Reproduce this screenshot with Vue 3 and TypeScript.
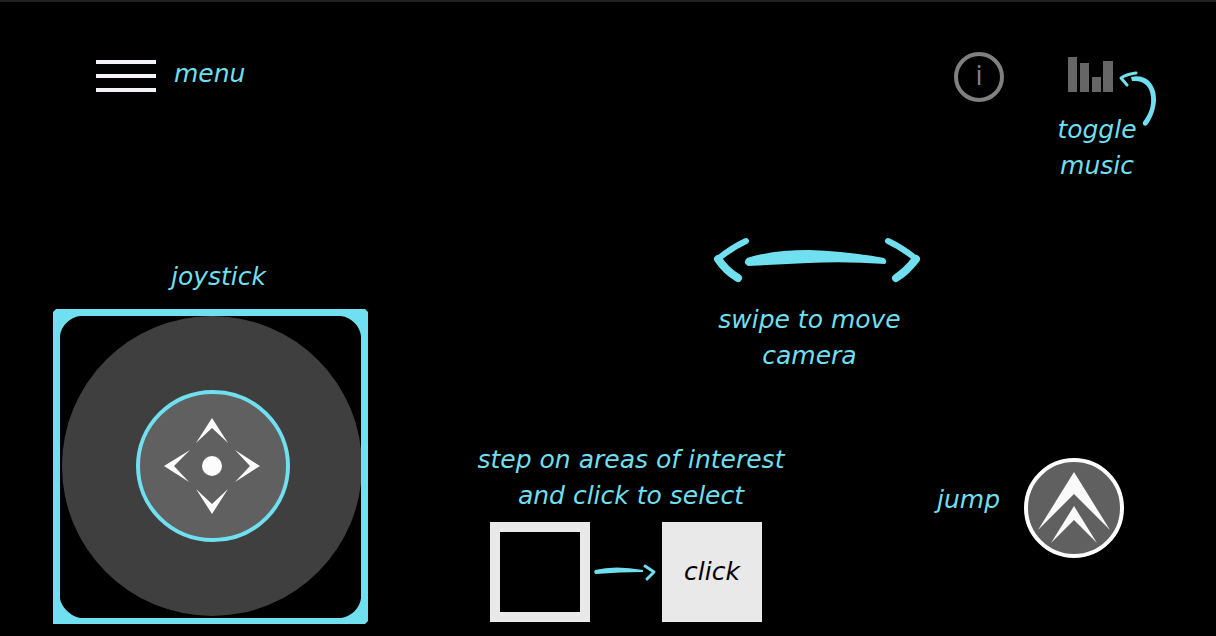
<script setup lang="ts">
interface Bar {
  x: number
  y: number
  width: number
}

const bars: Bar[] = [
  { x: 12, y: 1, width: 9 },
  { x: 24, y: 7, width: 9 },
  { x: 36, y: 21, width: 9 },
  { x: 47, y: 5, width: 10 },
]
</script>

<template>
  <div class="hud">
    <header class="top">
      <button class="menu" type="button">
        <svg class="burger" width="60" height="32" viewBox="0 0 60 32" aria-hidden="true">
          <path d="M0 2H60M0 16H60M0 30H60" stroke="#f5f2f6" stroke-width="4" />
        </svg>
        <span>menu</span>
      </button>

      <div class="actions">
        <button class="info" type="button" aria-label="Information">i</button>
        <button class="music" type="button">
          <svg class="music-icon" width="102" height="56" viewBox="0 0 102 56" aria-hidden="true">
            <rect v-for="bar in bars" :key="bar.x" :x="bar.x" :y="bar.y" :width="bar.width" :height="36 - bar.y" fill="#666" />
            <path d="M80 17Q71 18 65 22L71 29" fill="none" stroke="#70dfef" stroke-width="3" stroke-linecap="round" stroke-linejoin="round" />
            <path d="M75 21C91 17 101 30 100 45C99 56 95 64 91 69C89 71 86 69 87 66C93 58 96 50 95 41C94 30 88 24 76 25Z" fill="#70dfef" />
          </svg>
          <span>toggle<br />music</span>
        </button>
      </div>
    </header>

    <main class="controls">
      <section class="joystick">
        <h2 class="note">joystick</h2>
        <svg class="pad" width="315" height="315" viewBox="0 0 315 315" role="img" aria-label="joystick">
          <circle cx="159" cy="157" r="150" fill="#3f3f3f" />
          <ellipse cx="160" cy="157" rx="75" ry="74" fill="#606060" stroke="#70dfef" stroke-width="4" />
          <circle cx="159" cy="157" r="10" fill="#fcfcfc" />
          <g fill="#fcfcfc">
            <path d="M159 109L175 134L159 119L143 134Z" />
            <path d="M159 205L175 180L159 195L143 180Z" />
            <path d="M111 157L137 141L121 157L136 173Z" />
            <path d="M207 157L182 141L197 157L182 173Z" />
          </g>
          <path
            fill="#70dfef"
            fill-rule="evenodd"
            d="M3 0H312L315 3V312L312 315H0V3ZM27 7C17 8 8 17 7 27V289C8 298 18 308 28 309H288C298 308 307 299 308 289V27C307 17 298 8 288 7Z"
          />
        </svg>
      </section>

      <div class="field">
        <section class="swipe">
          <svg width="220" height="52" viewBox="0 0 220 52" aria-hidden="true">
            <g fill="none" stroke="#70dfef" stroke-linejoin="round" stroke-linecap="round">
              <path d="M46 7Q31 14 18 25" stroke-width="6" />
              <path d="M18 25Q26 37 38 44" stroke-width="8" />
              <path d="M188 7Q203 14 216 25" stroke-width="6" />
              <path d="M216 25Q207 37 196 44" stroke-width="8" />
            </g>
            <path d="M47 24Q72 16 109 16Q146 17 184 24Q188 27 185 30Q145 27 108 29L48 32Q42 29 47 24Z" fill="#70dfef" />
          </svg>
          <h2 class="note">swipe to move<br />camera</h2>
        </section>

        <div class="bottom">
          <section class="step">
            <h2 class="note">step on areas of interest<br />and click to select</h2>
            <div class="tiles">
              <div class="tile outline"></div>
              <svg width="72" height="24" viewBox="0 0 72 24" aria-hidden="true">
                <path d="M5 10Q25 5 53 10L53 12Q30 12 6 14Q3 13 5 10Z" fill="#70dfef" />
                <path d="M55 6L64 12L57 19" fill="none" stroke="#70dfef" stroke-width="3" stroke-linecap="round" stroke-linejoin="round" />
              </svg>
              <button class="tile click" type="button">click</button>
            </div>
          </section>

          <div class="jump">
            <label class="note" for="jump">jump</label>
            <button id="jump" class="jump-button" type="button">
              <svg width="100" height="100" viewBox="0 0 100 100" aria-hidden="true">
                <circle cx="50" cy="50" r="48" fill="#606060" stroke="#fff" stroke-width="4" />
                <path d="M50 14L86 72L50 36L14 72ZM50 48L73 85L50 62L27 85Z" fill="#fafafa" />
              </svg>
            </button>
          </div>
        </div>
      </div>
    </main>
  </div>
</template>

<style>
body {
  margin: 0;
  background: #000;
}
</style>

<style scoped>
.hud {
  box-sizing: border-box;
  display: flex;
  flex-direction: column;
  justify-content: space-between;
  min-height: 100vh;
  border-top: 2px solid #222;
  background: #000;
  color: #70dfef;
  font: italic 25px/36px "DejaVu Sans", sans-serif;
}

button {
  padding: 0;
  border: 0;
  background: none;
  color: inherit;
  font: inherit;
  cursor: pointer;
}

svg {
  display: block;
  flex: none;
}

.note {
  margin: 0;
  font: inherit;
  text-align: center;
  white-space: nowrap;
}

.top {
  display: flex;
  justify-content: space-between;
  align-items: flex-start;
  padding: 50px 58px 0 96px;
}

.menu {
  display: flex;
  align-items: center;
  gap: 18px;
  padding-top: 4px;
}

.burger {
  margin-top: 4px;
}

.actions {
  display: flex;
  align-items: flex-start;
  gap: 52px;
}

.info {
  box-sizing: border-box;
  width: 50px;
  height: 50px;
  border: 4px solid #808080;
  border-radius: 50%;
  color: #808080;
  font: 28px/36px "Open Sans", sans-serif;
  padding-bottom: 6px;
}

.music {
  padding-top: 4px;
  text-align: left;
}

.music-icon {
  overflow: visible;
}

.music span {
  display: block;
  width: 82px;
  text-align: center;
}

.controls {
  display: grid;
  grid-template-columns: 315px 1fr;
  align-items: end;
  padding: 0 92px 12px 53px;
}

.joystick .note {
  padding: 0 0 14px 16px;
}

.field {
  display: flex;
  flex-direction: column;
  gap: 68px;
  padding: 0 0 2px 107px;
}

.swipe {
  display: flex;
  flex-direction: column;
  align-items: center;
  gap: 16px;
  padding-left: 20px;
}

.bottom {
  display: flex;
  justify-content: space-between;
  align-items: flex-start;
}

.step {
  display: flex;
  flex-direction: column;
  align-items: center;
  gap: 8px;
  min-width: 312px;
}

.tiles {
  display: flex;
  align-items: center;
  padding-right: 10px;
}

.tile {
  box-sizing: border-box;
  width: 100px;
  height: 100px;
}

.outline {
  border: 10px solid #e9e9e9;
}

.click {
  background: #e9e9e9;
  color: #000;
}

.jump {
  display: flex;
  align-items: center;
  gap: 24px;
  padding-top: 16px;
}

.jump .note {
  padding-bottom: 16px;
}

.jump-button {
  border-radius: 50%;
}
</style>
